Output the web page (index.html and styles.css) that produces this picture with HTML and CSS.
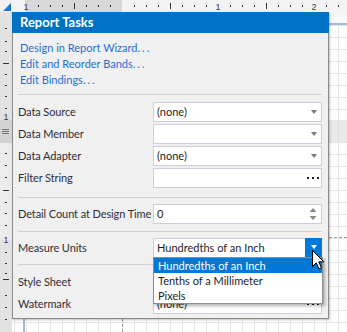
FILE: index.html
```html
<!DOCTYPE html>
<html>
<head>
<meta charset="utf-8">
<link rel="stylesheet" href="styles.css">
</head>
<body>
<div class="designer">
  <div class="corner">
    <svg width="12" height="12" viewBox="0 0 12 12"><polygon points="3,11 11,3 11,11" fill="#1f74c9"/></svg>
  </div>
  <div class="hruler">
    <svg width="335" height="12" viewBox="0 0 335 12">
      <rect x="0" y="0" width="335" height="12" fill="#f3f3f3"/>
      <rect x="13" y="0" width="97" height="12" fill="#d8d8d8"/>
      <g fill="#333">
        <rect x="26" y="5" width="1" height="2"/><rect x="38" y="5" width="1" height="2"/><rect x="50" y="5" width="1" height="2"/>
        <rect x="62" y="3" width="1" height="6"/>
        <rect x="74" y="5" width="1" height="2"/><rect x="86" y="5" width="1" height="2"/><rect x="98" y="5" width="1" height="2"/>
        <rect x="122" y="5" width="1" height="2"/><rect x="134" y="5" width="1" height="2"/><rect x="146" y="5" width="1" height="2"/>
        <rect x="158" y="3" width="1" height="6"/>
        <rect x="170" y="5" width="1" height="2"/><rect x="182" y="5" width="1" height="2"/><rect x="194" y="5" width="1" height="2"/>
        <rect x="218" y="5" width="1" height="2"/><rect x="230" y="5" width="1" height="2"/><rect x="242" y="5" width="1" height="2"/>
        <rect x="254" y="3" width="1" height="6"/>
        <rect x="266" y="5" width="1" height="2"/><rect x="278" y="5" width="1" height="2"/><rect x="290" y="5" width="1" height="2"/>
        <rect x="314" y="5" width="1" height="2"/><rect x="326" y="5" width="1" height="2"/>
      </g>
      <g class="rnum">
        <text x="14" y="10" text-anchor="middle">1</text>
        <text x="206" y="10" text-anchor="middle">1</text>
        <text x="302" y="10" text-anchor="middle">2</text>
      </g>
    </svg>
  </div>
  <div class="vruler">
    <svg width="12" height="320" viewBox="0 0 12 320">
      <rect x="0" y="0" width="12" height="320" fill="#ececec"/>
      <rect x="0" y="0" width="12" height="108" fill="#e2e2e2"/>
      <rect x="0" y="108" width="12" height="23" fill="#d3d3d3"/>
      <rect x="0" y="228" width="12" height="92" fill="#e2e2e2"/>
      <g fill="#777"><rect x="2" y="117" width="7" height="1"/><rect x="2" y="119" width="7" height="1"/><rect x="2" y="121" width="7" height="1"/></g>
      <g fill="#333">
        <rect x="5" y="16" width="2" height="1"/><rect x="5" y="29" width="2" height="1"/><rect x="5" y="39" width="2" height="1"/>
        <rect x="3" y="51" width="6" height="1"/>
        <rect x="5" y="62" width="2" height="1"/><rect x="5" y="73" width="2" height="1"/><rect x="5" y="84" width="2" height="1"/><rect x="5" y="96" width="2" height="1"/>
        <rect x="5" y="141" width="2" height="1"/><rect x="5" y="153" width="2" height="1"/><rect x="5" y="165" width="2" height="1"/>
        <rect x="3" y="178" width="6" height="1"/>
        <rect x="5" y="190" width="2" height="1"/><rect x="5" y="201" width="2" height="1"/><rect x="5" y="213" width="2" height="1"/>
        <rect x="5" y="240" width="2" height="1"/><rect x="5" y="251" width="2" height="1"/><rect x="5" y="261" width="2" height="1"/>
        <rect x="3" y="267" width="6" height="1"/>
        <rect x="5" y="283" width="2" height="1"/><rect x="5" y="295" width="2" height="1"/><rect x="5" y="307" width="2" height="1"/>
      </g>
      <g class="rnum">
        <text x="6" y="108" text-anchor="middle">1</text>
        <text x="6" y="231" text-anchor="middle">1</text>
      </g>
    </svg>
  </div>
  <div class="canvas">
    <div class="c-top"></div>
    <div class="c-bar"></div>
    <div class="c-grid c-g1"></div>
    <div class="c-head"></div>
    <div class="c-grid c-g2"></div>
    <div class="c-g3">
      <div class="c-grid c-left"></div>
      <div class="c-vbar"></div>
      <div class="c-grid c-inner"></div>
      <div class="c-grid c-right"></div>
    </div>
  </div>
</div>

<div class="tasks">
  <div class="tasks-title">Report Tasks</div>
  <div class="tasks-body">
    <div class="tasks-links">
      <a class="link">Design in Report Wizard<span class="dots">...</span></a>
      <a class="link">Edit and Reorder Bands<span class="dots">...</span></a>
      <a class="link">Edit Bindings<span class="dots">...</span></a>
    </div>
    <div class="group g1">
      <div class="prop">
        <span class="prop-label">Data Source</span>
        <div class="editor"><span class="editor-text">(none)</span><span class="btn"><span class="caret"></span></span></div>
      </div>
      <div class="prop">
        <span class="prop-label">Data Member</span>
        <div class="editor"><span class="editor-text"></span><span class="btn"><span class="caret"></span></span></div>
      </div>
      <div class="prop">
        <span class="prop-label">Data Adapter</span>
        <div class="editor"><span class="editor-text">(none)</span><span class="btn"><span class="caret"></span></span></div>
      </div>
      <div class="prop">
        <span class="prop-label">Filter String</span>
        <div class="editor"><span class="editor-text"></span><span class="btn"><span class="ell"><i></i><i></i><i></i></span></span></div>
      </div>
    </div>
    <div class="group g2">
      <div class="prop">
        <span class="prop-label">Detail Count at Design Time</span>
        <div class="editor"><span class="editor-text">0</span><span class="btn">
          <svg width="8" height="14" viewBox="0 0 8 14"><polygon points="0.5,5 4,1 7.5,5" fill="#8a8a8a"/><polygon points="0.5,9 4,13 7.5,9" fill="#8a8a8a"/></svg>
        </span></div>
      </div>
    </div>
    <div class="group g3">
      <div class="prop">
        <span class="prop-label">Measure Units</span>
        <div class="editor open"><span class="editor-text">Hundredths of an Inch</span><span class="btn btn-active"><span class="caret caret-white"></span>
          <svg class="cursor" width="13" height="20" viewBox="0 0 13 20"><path d="M0.5 0.5 L0.5 16.5 L4.3 12.8 L7 18.8 L9.4 17.8 L6.8 11.8 L11.8 11.8 Z" fill="#fff" stroke="#000" stroke-width="1" stroke-linejoin="round"/></svg>
        </span>
          <ul class="dropdown">
            <li class="selected">Hundredths of an Inch</li>
            <li>Tenths of a Millimeter</li>
            <li>Pixels</li>
          </ul>
        </div>
      </div>
    </div>
    <div class="group g4">
      <div class="prop">
        <span class="prop-label">Style Sheet</span>
        <div class="editor"><span class="editor-text"></span><span class="btn"><span class="caret"></span></span></div>
      </div>
      <div class="prop">
        <span class="prop-label">Watermark</span>
        <div class="editor"><span class="editor-text editor-text-low">(none)</span><span class="btn"><span class="ell"><i></i><i></i><i></i></span></span></div>
      </div>
    </div>
  </div>
</div>
</body>
</html>
```

FILE: styles.css
```css
html, body {
  margin: 0;
  padding: 0;
}
body {
  width: 347px;
  height: 332px;
  overflow: hidden;
  position: relative;
  font-family: Lato, "Noto Sans", sans-serif;
  font-size: 11px;
  color: #333;
  background: #f0f0f0;
}

/* ---------- designer surface ---------- */
.designer {
  display: grid;
  grid-template-columns: 12px 335px;
  grid-template-rows: 12px 320px;
}
.corner {
  background: #f0f0f0;
}
.corner svg, .hruler svg, .vruler svg {
  display: block;
}
.rnum text {
  font-family: "Liberation Sans", sans-serif;
  font-size: 9px;
  fill: #3a3a3a;
}
.canvas {
  display: flex;
  flex-direction: column;
  background: #fff;
}
.c-top {
  height: 11px;
  background: #f7f7f7;
}
.c-bar {
  height: 2px;
  background: #a8b9d5;
}
.c-grid {
  background-color: #fff;
  background-image:
    linear-gradient(to right, #e6e6e6 1px, transparent 1px),
    linear-gradient(to bottom, #e6e6e6 1px, transparent 1px);
  background-size: 12px 12px;
}
.c-g1 {
  height: 95px;
  background-position: 2px 0;
}
.c-head {
  height: 22px;
  background-color: #e9e9e9;
  background-image: linear-gradient(to right, #dedede 1px, transparent 1px);
  background-size: 12px 12px;
  background-position: 2px 0;
}
.c-g2 {
  height: 95px;
  border-bottom: 1px dashed #9c9c9c;
  background-position: 2px 0;
}
.c-g3 {
  flex: 1;
  display: flex;
}
.c-left {
  width: 11px;
  background-position: 2px 0;
}
.c-vbar {
  width: 2px;
  background: #a8b9d5;
}
.c-inner {
  width: 97px;
  background-position: 1px 0;
}
.c-right {
  flex: 1;
  border-left: 1px dashed #9c9c9c;
  background-position: 11px 0;
}

/* ---------- smart tag panel ---------- */
.tasks {
  position: absolute;
  left: 12px;
  top: 12px;
  width: 317px;
  box-shadow: 1px 1px 2px rgba(0, 0, 0, 0.25);
}
.tasks-title {
  height: 21px;
  background: #0072c6;
  color: #fff;
  font-weight: bold;
  font-size: 13px;
  line-height: 21px;
  padding-left: 8px;
}
.tasks-body {
  background: #f0f0f0;
  border: 1px solid #8a8a8a;
  border-top: none;
  padding-bottom: 4px;
}
.tasks-links {
  margin: 0 6px 0 5px;
  padding: 7px 0 6px 2px;
  border-bottom: 1px solid #cfd0da;
  display: flex;
  flex-direction: column;
}
.link {
  color: #1f6fd0;
  line-height: 16px;
  height: 16px;
}
.dots {
  letter-spacing: 2px;
}
.group {
  margin: 0 6px 0 5px;
  display: flex;
  flex-direction: column;
  gap: 2px;
  border-bottom: 1px solid #cfd0da;
}
.g1 { padding: 7px 0 9px; }
.g2 { padding: 6px 0 7px; }
.g3 { padding: 6px 0 6px; }
.g4 { padding: 7px 0 0; border-bottom: none; }

.prop {
  display: grid;
  grid-template-columns: 135px 169px;
  height: 20px;
}
.prop-label {
  line-height: 20px;
  white-space: nowrap;
  color: #2e2e38;
  letter-spacing: -0.1px;
}
.editor {
  position: relative;
  display: flex;
  align-items: center;
  background: #fff;
  border: 1px solid #cdcedb;
  box-sizing: border-box;
  height: 20px;
}
.editor-text {
  flex: 1;
  padding-left: 3px;
  color: #1e1e1e;
  white-space: nowrap;
  line-height: 18px;
}
.btn {
  width: 16px;
  align-self: stretch;
  display: flex;
  align-items: center;
  justify-content: center;
  position: relative;
}
.caret {
  width: 0;
  height: 0;
  border-left: 3.5px solid transparent;
  border-right: 3.5px solid transparent;
  border-top: 4px solid #7c7c7c;
  margin-left: 1px;
}
.caret-white {
  border-top-color: #fff;
  margin-top: -2px;
}
.btn-active {
  background: #0078d7;
  margin: -1px -1px -1px 0;
  width: 17px;
}
.ell {
  display: flex;
  gap: 3px;
  margin-left: -1px;
}
.ell i {
  display: block;
  width: 2px;
  height: 2px;
  background: #1e1e1e;
}
.cursor {
  position: absolute;
  left: 7px;
  top: 12px;
  z-index: 5;
}
.dropdown {
  position: absolute;
  left: -1px;
  top: 100%;
  width: 170px;
  box-sizing: border-box;
  margin: 0;
  padding: 0;
  list-style: none;
  background: #fff;
  border: 1px solid #8d8d8d;
  box-shadow: 2px 2px 3px rgba(0, 0, 0, 0.3);
  z-index: 4;
}
.dropdown li {
  height: 15px;
  line-height: 15px;
  padding-left: 4px;
  color: #1e1e1e;
  white-space: nowrap;
}
.dropdown li.selected {
  background: #0078d7;
  color: #fff;
}
```
